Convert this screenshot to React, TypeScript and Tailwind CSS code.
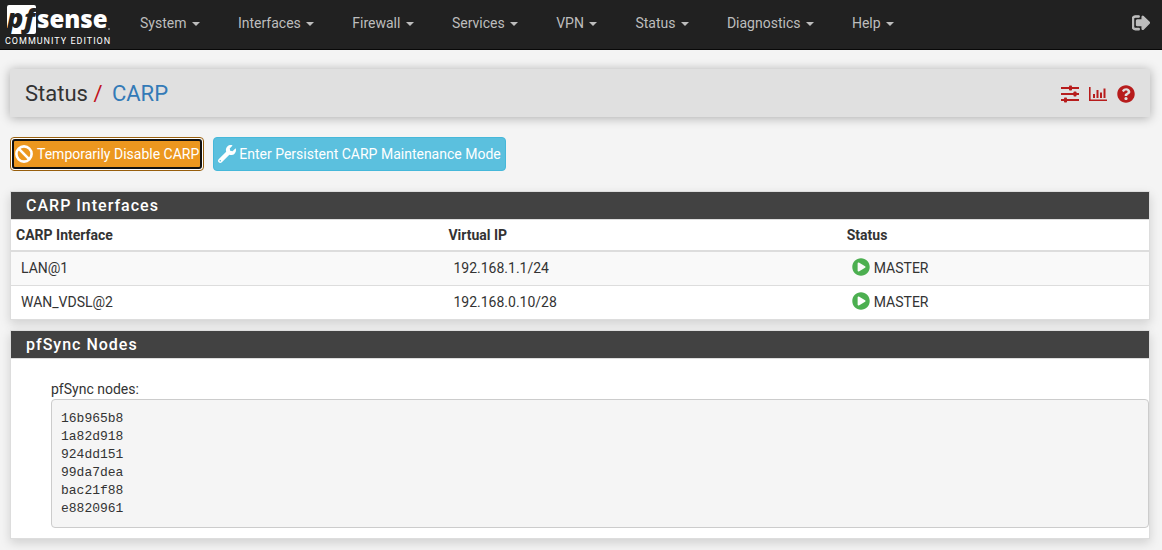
import { FaPlayCircle, FaQuestionCircle, FaWrench } from "react-icons/fa";

const menu = ["System", "Interfaces", "Firewall", "Services", "VPN", "Status", "Diagnostics", "Help"];

const interfaces = [
  { name: "LAN@1", ip: "192.168.1.1/24", status: "MASTER" },
  { name: "WAN_VDSL@2", ip: "192.168.0.10/28", status: "MASTER" },
];

const nodes = ["16b965b8", "1a82d918", "924dd151", "99da7dea", "bac21f88", "e8820961"];

function Logo() {
  return (
    <svg aria-label="pfSense Community Edition" className="h-[50px] w-[120px]" role="img" viewBox="0 0 120 50">
      <path d="M9 5H34Q36 5 36 7V32Q36 34 34 34H10L11.500 28H7V7Q7 5 9 5Z" fill="#fff" />
      <text fill="#212121" fontFamily="Open Sans, sans-serif" fontSize="27" fontStyle="italic" fontWeight="800" x="7 24" y="28">
        pf
      </text>
      <text fill="#fff" fontFamily="Open Sans, sans-serif" fontSize="24" fontWeight="800" x="37" y="28">
        sense
      </text>
      <circle cx="109" cy="29" fill="#888" r="1" />
      <text fill="#fff" fontFamily="Roboto, sans-serif" fontSize="9" letterSpacing="1" x="5" y="44">
        COMMUNITY EDITION
      </text>
    </svg>
  );
}

function SlidersIcon() {
  return (
    <svg className="h-[18px] w-[18px]" fill="currentColor" viewBox="0 0 18 18">
      <path d="M0 2h18v2H0zM0 8h18v2H0zM0 14h18v2H0z" />
      <rect height="5" rx="0.8" width="3" x="8" y="0.5" />
      <rect height="5" rx="0.8" width="3" x="12.5" y="6.5" />
      <rect height="5" rx="0.8" width="3" x="3" y="12.5" />
    </svg>
  );
}

function ChartIcon() {
  return (
    <svg className="h-[18px] w-[18px]" fill="none" stroke="currentColor" strokeWidth="2" viewBox="0 0 18 18">
      <path d="M0.8 2v13.2H18" strokeWidth="1.6" />
      <path d="M5 9v4M8.5 5v8M12 7.5v5.5M15.5 3.5v9.5" />
    </svg>
  );
}

function SignOutIcon() {
  return (
    <svg className="h-[18px] w-[18px]" fill="currentColor" stroke="currentColor" strokeWidth="110" viewBox="-20 96 1640 1640">
      <path d="M640 1440q0 4 1 20t.5 26.5-3 23.5-10 19.5-20.5 6.5h-320q-119 0-203.5-84.5t-84.5-203.5v-704q0-119 84.5-203.5t203.5-84.5h320q13 0 22.5 9.5t9.5 22.5q0 4 1 20t.5 26.5-3 23.5-10 19.5-20.5 6.5h-320q-66 0-113 47t-47 113v704q0 66 47 113t113 47h312l11.5 1 11.5 3 8 5.5 7 9 2 13.5zm928-544q0 26-19 45l-544 544q-19 19-45 19t-45-19-19-45v-288h-448q-26 0-45-19t-19-45v-384q0-26 19-45t45-19h448v-288q0-26 19-45t45-19 45 19l544 544q19 19 19 45z" />
    </svg>
  );
}

function BanIcon() {
  return (
    <svg className="h-[18px] w-[18px]" fill="none" stroke="currentColor" strokeWidth="2.6" viewBox="0 0 18 18">
      <circle cx="9" cy="9" r="7.6" />
      <path d="M3.7 3.7l10.6 10.6" />
    </svg>
  );
}

export default function App() {
  return (
    <div className="min-h-screen bg-[#f4f4f4] pb-3 font-[Roboto,sans-serif] text-sm leading-5 text-[#333]">
      <nav className="flex h-[50px] items-center border-b border-[#080808] bg-[#212121] text-[#bdbdbd]">
        <a className="mr-5" href="#">
          <Logo />
        </a>
        <ul className="flex gap-[38px] pb-1">
          {menu.map((label) => (
            <li key={label}>
              <a href="#">
                {label}{" "}
                <span className="ml-0.5 inline-block border-x-4 border-t-4 border-x-transparent border-t-current align-middle" />
              </a>
            </li>
          ))}
        </ul>
        <a aria-label="Logout" className="mr-3 ml-auto pb-1" href="#">
          <SignOutIcon />
        </a>
      </nav>

      <main className="px-2.5 pr-3 pt-[19px]">
        <header className="flex h-12 items-center justify-between bg-[#e0e0e0] px-[15px] pt-0.5 shadow-[0_1px_10px_rgba(0,0,0,0.3)]">
          <h1 className="text-[22px] leading-6">
            Status <span className="mr-1 text-[#c1121c]">/</span>{" "}
            <a className="text-[#337ab7]" href="#">
              CARP
            </a>
          </h1>
          <div className="flex items-center gap-2.5 text-[#b71c1c]">
            <a aria-label="Settings" href="#">
              <SlidersIcon />
            </a>
            <a aria-label="Monitoring" href="#">
              <ChartIcon />
            </a>
            <a aria-label="Help" href="#">
              <FaQuestionCircle size={18} />
            </a>
          </div>
        </header>

        <div className="mt-5 flex gap-[9px]">
          <button
            className="flex h-[34px] items-center rounded border border-[#985f0d] bg-white p-px text-white"
            type="button"
          >
            <span className="flex h-[30px] items-center gap-1 rounded-[3px] border-2 border-[#101010] bg-[#ec971f] px-px">
              <BanIcon />
              Temporarily Disable CARP
            </span>
          </button>
          <button
            className="flex h-[34px] items-center gap-[3px] rounded border border-[#46b8da] bg-[#5bc0de] px-1 text-white"
            type="button"
          >
            <FaWrench size={18} />
            Enter Persistent CARP Maintenance Mode
          </button>
        </div>

        <section className="mt-5 border border-[#ddd] bg-white shadow-[0_4px_10px_rgba(0,0,0,0.15)]">
          <h2 className="border-b border-[#ddd] bg-[#424242] px-[15px] pt-1 pb-[3px] text-base leading-5 font-medium tracking-[1px] text-white">
            CARP Interfaces
          </h2>
          <table className="w-full table-fixed border-collapse text-left">
            <thead>
              <tr className="h-[31px] border-b-2 border-[#ddd]">
                <th className="w-[38%] px-[5px] font-bold">CARP Interface</th>
                <th className="w-[35%] px-[5px] font-bold">Virtual IP</th>
                <th className="px-[5px] font-bold">Status</th>
              </tr>
            </thead>
            <tbody>
              {interfaces.map((row) => (
                <tr className="h-[34px] border-b border-[#ddd] odd:bg-[#f9f9f9] last:border-b-0" key={row.name}>
                  <td className="px-2.5">{row.name}</td>
                  <td className="px-2.5">{row.ip}</td>
                  <td className="px-2.5">
                    <div className="flex items-center gap-1">
                      <FaPlayCircle className="mb-0.5" color="#4caf50" size={18} />
                      {row.status}
                    </div>
                  </td>
                </tr>
              ))}
            </tbody>
          </table>
        </section>

        <section className="mt-2.5 border border-[#ddd] bg-white pb-2.5 shadow-[0_4px_10px_rgba(0,0,0,0.15)]">
          <h2 className="border-b border-[#ddd] bg-[#424242] px-[15px] pt-1 pb-[3px] text-base leading-5 font-medium tracking-[1px] text-white">
            pfSync Nodes
          </h2>
          <div className="pt-5 pl-10">
            pfSync nodes:
            <pre className="rounded border border-[#ccc] bg-[#f5f5f5] px-[9px] pt-2.5 pb-[9px] font-['Liberation_Mono',monospace] text-[13px] leading-[18px]">
              {nodes.join("\n")}
            </pre>
          </div>
        </section>
      </main>
    </div>
  );
}
